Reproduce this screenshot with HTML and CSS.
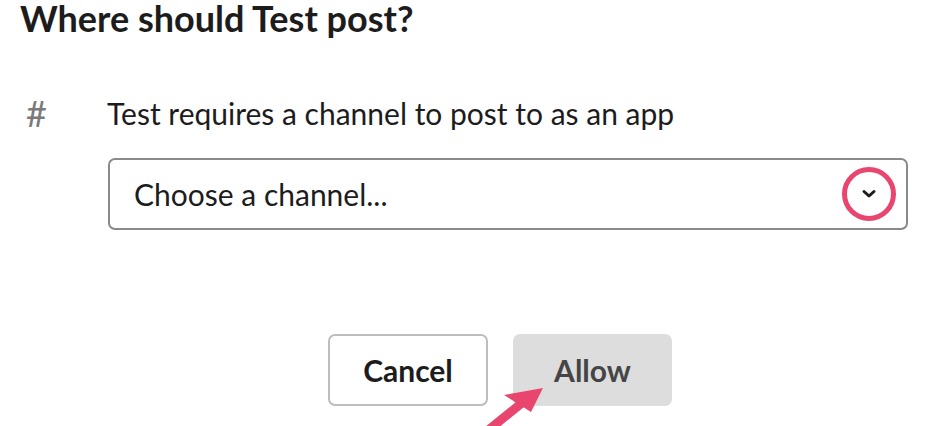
FILE: index.html
```html
<!DOCTYPE html>
<html>
<head>
<meta charset="utf-8">
<link rel="stylesheet" href="styles.css">
</head>
<body>
<div class="dialog">
  <h1 class="title">Where should Test post?</h1>
  <div class="channel-row">
    <span class="hash">#</span>
    <span class="desc">Test requires a channel to post to as an app</span>
  </div>
  <div class="select">
    <span class="placeholder">Choose a channel...</span>
    <span class="chevron-ring">
      <svg width="16" height="10" viewBox="0 0 16 10"><path d="M3 2.5 L8 7 L13 2.5" fill="none" stroke="#1d1c1d" stroke-width="3" stroke-linecap="round" stroke-linejoin="round"/></svg>
    </span>
  </div>
  <div class="actions">
    <button class="btn btn-cancel">Cancel</button>
    <button class="btn btn-allow">Allow</button>
  </div>
  <svg class="arrow" width="942" height="426" viewBox="0 0 942 426">
    <line x1="486" y1="432" x2="528" y2="398" stroke="#e8456f" stroke-width="9"/>
    <polygon points="543,388 504,395 531,412" fill="#e8456f"/>
  </svg>
</div>
</body>
</html>
```
FILE: styles.css
```css
html, body {
  margin: 0;
  padding: 0;
  background: #ffffff;
  overflow: hidden;
}
.dialog {
  position: relative;
  width: 942px;
  height: 426px;
  font-family: Lato, "Noto Sans", sans-serif;
  color: #1d1c1d;
}
.title {
  margin: 0;
  padding: 0 0 0 20px;
  font-size: 36px;
  font-weight: 700;
  line-height: 36px;
  height: 36px;
}
.channel-row {
  display: flex;
  align-items: center;
  margin-top: 59px;
  height: 36px;
}
.hash {
  width: 107px;
  padding-left: 26px;
  box-sizing: border-box;
  font-size: 36px;
  color: #7a7a7a;
  font-weight: 400;
}
.desc {
  font-size: 30px;
  line-height: 36px;
}
.select {
  display: flex;
  align-items: center;
  justify-content: space-between;
  margin: 27px 0 0 108px;
  width: 800px;
  height: 72px;
  box-sizing: border-box;
  border: 2px solid #8a8a8a;
  border-radius: 7px;
  padding: 0 10px 0 24px;
}
.placeholder {
  font-size: 30px;
}
.chevron-ring {
  display: flex;
  align-items: center;
  justify-content: center;
  width: 54px;
  height: 54px;
  box-sizing: border-box;
  border: 5px solid #e8456f;
  border-radius: 50%;
}
.actions {
  display: flex;
  gap: 25px;
  margin: 104px 0 0 328px;
}
.btn {
  font-family: Lato, "Noto Sans", sans-serif;
  font-weight: 700;
  font-size: 30px;
  height: 72px;
  width: 160px;
  border-radius: 7px;
  box-sizing: border-box;
  padding: 0;
}
.btn-cancel {
  background: #ffffff;
  border: 2px solid #bdbdbd;
  color: #1d1c1d;
}
.btn-allow {
  background: #dddddd;
  border: none;
  color: #454545;
  width: 159px;
}
.arrow {
  position: absolute;
  left: 0;
  top: 0;
  pointer-events: none;
}
```
